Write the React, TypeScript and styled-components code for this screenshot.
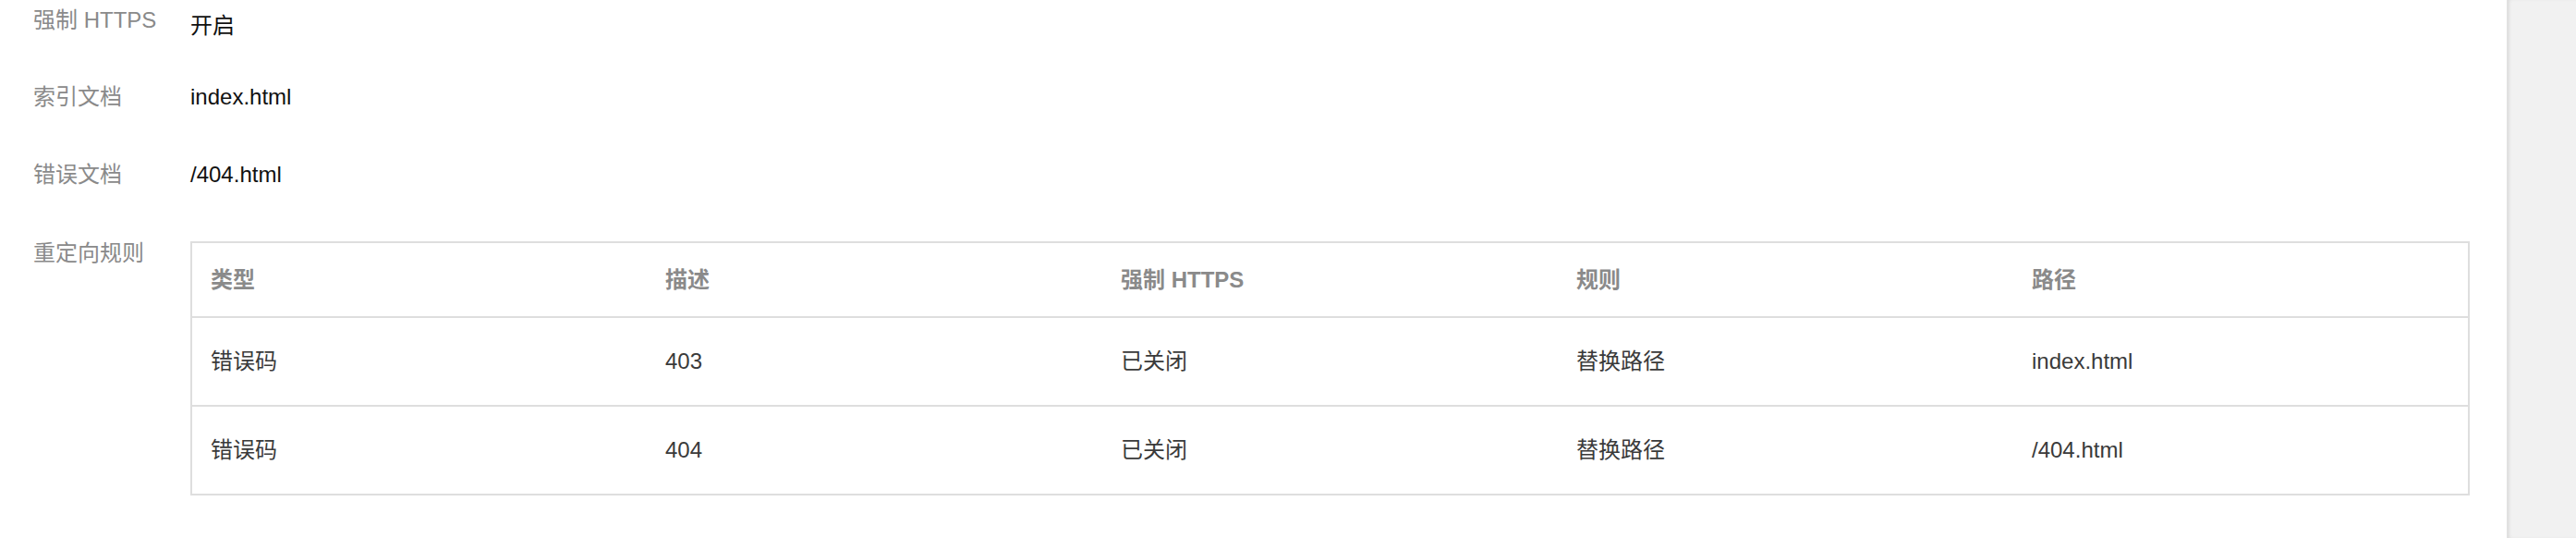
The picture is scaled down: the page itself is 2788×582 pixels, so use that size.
import React from 'react';
import styled, { createGlobalStyle } from 'styled-components';

const GlobalStyle = createGlobalStyle`
  html, body {
    margin: 0;
    padding: 0;
    background: #fff;
  }
  body {
    font-family: "Liberation Sans", "Noto Sans CJK SC", sans-serif;
    font-size: 24px;
  }
`;

const Page = styled.div`
  display: flex;
  height: 582px;
  overflow: hidden;
`;

const Main = styled.main`
  flex: 1;
  background: #fff;
  padding: 4px 40px 0 36px;
`;

const Aside = styled.aside`
  width: 74px;
  background: #f1f1f1;
  box-shadow: inset 3px 0 4px -2px rgba(0, 0, 0, 0.12);
  border-left: 1px solid #e2e2e2;
`;

const FormRow = styled.div<{ $gap: number }>`
  display: flex;
  align-items: flex-start;
  line-height: 36px;
  margin-bottom: ${({ $gap }) => $gap}px;
`;

const Label = styled.div`
  width: 170px;
  flex-shrink: 0;
  color: #8a8a8a;
`;

const Value = styled.div<{ $offset?: number }>`
  color: #111;
  padding-top: ${({ $offset }) => $offset || 0}px;
`;

const TableWrap = styled.div`
  flex: 1;
  min-width: 0;
  padding-top: 5px;
`;

const Table = styled.table`
  width: 100%;
  border-collapse: collapse;
  table-layout: fixed;
  border: 2px solid #dedede;
  line-height: 36px;
`;

const HeadCell = styled.th`
  text-align: left;
  font-weight: bold;
  color: #8a8a8a;
  padding: 22px 20px 21px;
  border-bottom: 2px solid #dedede;
`;

const Cell = styled.td`
  color: #3a3a3a;
  padding: 29px 20px;
  border-bottom: 2px solid #dedede;
`;

const columns = ['类型', '描述', '强制 HTTPS', '规则', '路径'];

const rules = [
  ['错误码', '403', '已关闭', '替换路径', 'index.html'],
  ['错误码', '404', '已关闭', '替换路径', '/404.html'],
];

export default function App() {
  return (
    <>
      <GlobalStyle />
      <Page>
        <Main>
          <FormRow $gap={41}>
            <Label>强制 HTTPS</Label>
            <Value $offset={6}>开启</Value>
          </FormRow>
          <FormRow $gap={48}>
            <Label>索引文档</Label>
            <Value>index.html</Value>
          </FormRow>
          <FormRow $gap={49}>
            <Label>错误文档</Label>
            <Value>/404.html</Value>
          </FormRow>
          <FormRow $gap={0}>
            <Label>重定向规则</Label>
            <TableWrap>
              <Table>
                <thead>
                  <tr>
                    {columns.map((c) => (
                      <HeadCell key={c}>{c}</HeadCell>
                    ))}
                  </tr>
                </thead>
                <tbody>
                  {rules.map((r, i) => (
                    <tr key={i}>
                      {r.map((v, j) => (
                        <Cell key={j}>{v}</Cell>
                      ))}
                    </tr>
                  ))}
                </tbody>
              </Table>
            </TableWrap>
          </FormRow>
        </Main>
        <Aside />
      </Page>
    </>
  );
}
